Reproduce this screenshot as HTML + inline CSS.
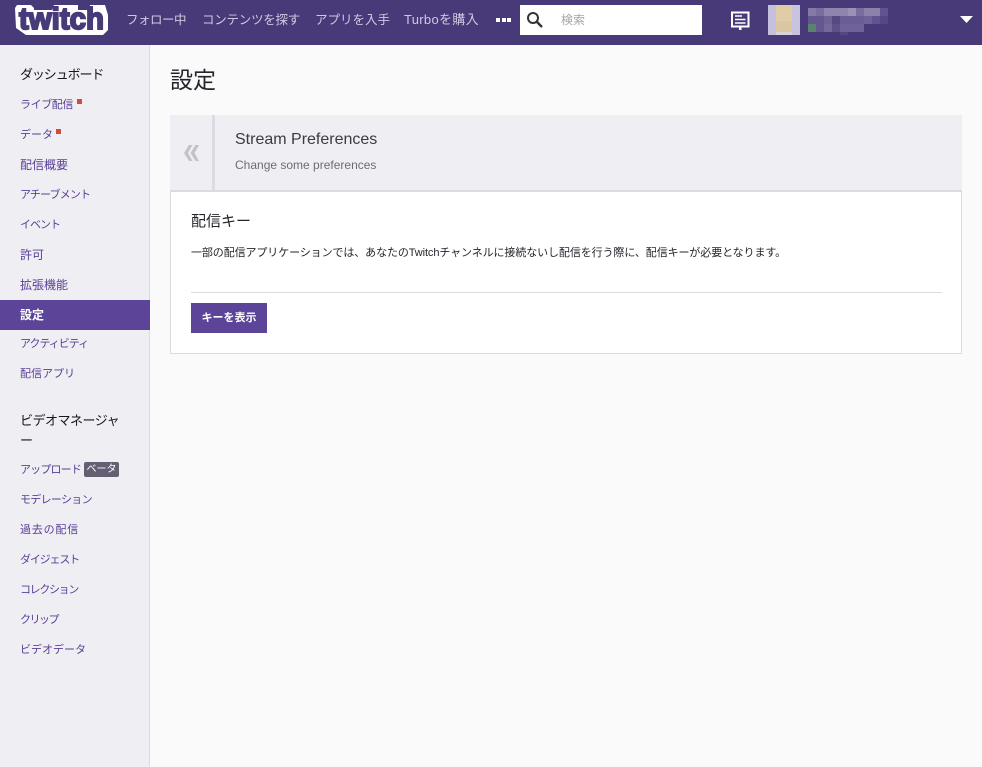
<!DOCTYPE html>
<html lang="ja"><head><meta charset="utf-8"><title>設定</title>
<style>
*{box-sizing:border-box}
html,body{margin:0;padding:0;width:982px;height:767px;overflow:hidden;background:#fafafa;font-family:"Liberation Sans","Noto Sans CJK JP",sans-serif;}
.a{position:absolute;white-space:nowrap}
#top{position:absolute;left:0;top:0;width:982px;height:45px;background:#483a79}
.nav{position:absolute;top:11px;font-size:12.5px;line-height:18px;color:#cfc8e0;white-space:nowrap}
#side{position:absolute;left:0;top:45px;width:150px;height:722px;background:#efeef3;border-right:1px solid #dcdbe2}
.h{position:absolute;left:20px;font-size:13px;line-height:18px;color:#19171c;white-space:nowrap}
.l{position:absolute;left:20px;font-size:11px;line-height:16px;color:#5a3f96;white-space:nowrap}
.k{font-size:12px}
.px{position:absolute;width:8px;height:8px}
</style></head><body>
<div id="top">
<svg class="a" style="left:0;top:0" width="120" height="45" viewBox="0 0 120 45"><path d="M15 8L17 5H31L34 8V10H52L54 5H78V10H90V5H105L108 15V30L103 35H26L16 28Z" fill="#fff"/><text x="19" y="29" font-family="Liberation Sans" font-weight="700" font-size="31" textLength="85" lengthAdjust="spacingAndGlyphs" fill="#483a79" stroke="#483a79" stroke-width="2">twitch</text></svg>
<div class="nav" style="left:126px;letter-spacing:-.5px">フォロー中</div>
<div class="nav" style="left:202px;letter-spacing:-.25px">コンテンツを探す</div>
<div class="nav" style="left:315px">アプリを入手</div>
<div class="nav" style="left:404px;font-size:13px;letter-spacing:.3px">Turboを購入</div>
<div class="a" style="left:496px;top:18px;width:4px;height:4px;background:#fff"></div>
<div class="a" style="left:502px;top:18px;width:4px;height:4px;background:#fff"></div>
<div class="a" style="left:507px;top:18px;width:4px;height:4px;background:#fff"></div>
<div class="a" style="left:520px;top:5px;width:182px;height:30px;background:#fff"></div>
<svg class="a" style="left:526px;top:11px" width="18" height="18" viewBox="0 0 18 18"><circle cx="7" cy="7" r="5" fill="none" stroke="#333" stroke-width="2"/><path d="M10.5 10.5L16 16" stroke="#333" stroke-width="2.4"/></svg>
<div class="a" style="left:561px;top:11px;font-size:12px;line-height:18px;color:#a5a5a8">検索</div>
<svg class="a" style="left:731px;top:11px" width="20" height="20" viewBox="0 0 20 20"><path d="M1 1.5h16.500v14H1z" fill="none" stroke="#fff" stroke-width="2"/><path d="M4 5h7M4 8.500h10.500M4 12h10.500" stroke="#fff" stroke-width="1.600"/><path d="M8 16h2.500v3H8z" fill="#fff"/></svg>
<div class="a" style="left:768px;top:5px;width:32px;height:30px;background:linear-gradient(90deg,#c5c0de 0 8px,#e0cda6 8px 24px,#c8c3df 24px)"></div>
<div class="a" style="left:776px;top:32px;width:16px;height:3px;background:#dcd3d6"></div>
<div class="a" style="left:776px;top:21px;width:16px;height:11px;background:#d9c7a3"></div>
<div class="px" style="left:808px;top:8px;background:#8579a6"></div>
<div class="px" style="left:816px;top:8px;background:#7a6d9e"></div>
<div class="px" style="left:824px;top:8px;width:24px;background:#8e84ad"></div>
<div class="px" style="left:848px;top:8px;background:#9a91b6"></div>
<div class="px" style="left:856px;top:8px;background:#7a6d9e"></div>
<div class="px" style="left:864px;top:8px;width:16px;background:#8b81ab"></div>
<div class="px" style="left:880px;top:8px;background:#625390"></div>
<div class="px" style="left:808px;top:16px;width:16px;background:#65568f"></div>
<div class="px" style="left:824px;top:16px;background:#6f6299"></div>
<div class="px" style="left:832px;top:16px;background:#574782"></div>
<div class="px" style="left:840px;top:16px;width:24px;background:#6a5c94"></div>
<div class="px" style="left:864px;top:16px;background:#6f6299"></div>
<div class="px" style="left:872px;top:16px;background:#625390"></div>
<div class="px" style="left:880px;top:16px;background:#564684"></div>
<div class="px" style="left:808px;top:24px;background:#5a8270"></div>
<div class="px" style="left:816px;top:24px;background:#65568f"></div>
<div class="px" style="left:824px;top:24px;background:#75689b"></div>
<div class="px" style="left:832px;top:24px;background:#5f5089"></div>
<div class="px" style="left:840px;top:24px;width:24px;background:#6f6299"></div>
<div class="a" style="left:840px;top:32px;width:8px;height:3px;background:#564684"></div>
<svg class="a" style="left:960px;top:16px" width="13" height="8" viewBox="0 0 13 8"><path d="M0 0h13L6.500 7z" fill="#fff"/></svg>
</div>

<div id="side">
<div class="h" style="top:21px;letter-spacing:-1.100px">ダッシュボード</div>
<div class="l" style="top:52px;letter-spacing:-.4px">ライブ配信</div>
<div class="a" style="left:77px;top:54px;width:5px;height:5px;background:#d44b3c"></div>
<div class="l" style="top:82px">データ</div>
<div class="a" style="left:56px;top:84px;width:5px;height:5px;background:#d44b3c"></div>
<div class="l k" style="top:112px">配信概要</div>
<div class="l" style="top:142px;letter-spacing:-.86px">アチーブメント</div>
<div class="l" style="top:172px;letter-spacing:-1px">イベント</div>
<div class="l k" style="top:202px">許可</div>
<div class="l k" style="top:232px">拡張機能</div>
<div class="a" style="left:0;top:255px;width:150px;height:30px;background:#5c4499"></div>
<div class="l k" style="top:262px;color:#fff;font-weight:700">設定</div>
<div class="l" style="top:291px;letter-spacing:-1px">アクティビティ</div>
<div class="l" style="top:321px">配信アプリ</div>
<div class="h" style="top:366px;width:110px;white-space:normal;line-height:20px;letter-spacing:-.5px">ビデオマネージャー</div>
<div class="l" style="top:417px;letter-spacing:-.83px">アップロード</div>
<div class="a" style="left:84px;top:417px;width:35px;height:15px;background:#655f74;border-radius:2px;color:#fff;font-size:10px;line-height:16px;text-align:center">ベータ</div>
<div class="l" style="top:447px;letter-spacing:-.7px">モデレーション</div>
<div class="l" style="top:477px;letter-spacing:.8px">過去の配信</div>
<div class="l" style="top:507px;letter-spacing:-1.170px">ダイジェスト</div>
<div class="l" style="top:537px;letter-spacing:-1.330px">コレクション</div>
<div class="l" style="top:567px;letter-spacing:-1.500px">クリップ</div>
<div class="l" style="top:597px">ビデオデータ</div>
</div>

<div class="a" style="left:170px;top:65px;font-size:23px;line-height:30px;color:#26232b">設定</div>

<div class="a" style="left:170px;top:115px;width:792px;height:77px;background:#efeef3;border-bottom:2px solid #dcdbe2"></div>
<div class="a" style="left:212px;top:115px;width:3px;height:75px;background:#dcdbe2"></div>
<svg class="a" style="left:183px;top:144px" width="17" height="18" viewBox="0 0 17 18"><path d="M6 1L1 9l5 8h3.500L5 9 9.500 1zM12.500 1L7.500 9l5 8H16L11.500 9 16 1z" fill="#c3c2c9"/></svg>
<div class="a" style="left:235px;top:130px;font-size:16px;line-height:19px;color:#3c3a42">Stream Preferences</div>
<div class="a" style="left:235px;top:157px;font-size:12px;line-height:16px;color:#6e6b77">Change some preferences</div>

<div class="a" style="left:170px;top:192px;width:792px;height:162px;background:#fff;border:1px solid #dcdbe0;border-top:0"></div>
<div class="a" style="left:191px;top:212px;font-size:15px;line-height:20px;color:#26232b">配信キー</div>
<div class="a" style="left:191px;top:245px;font-size:11px;line-height:16px;color:#26232b;letter-spacing:-.1px">一部の配信アプリケーションでは、あなたのTwitchチャンネルに接続ないし配信を行う際に、配信キーが必要となります。</div>
<div class="a" style="left:191px;top:292px;width:751px;height:1px;background:#dcdbe0"></div>
<div class="a" style="left:191px;top:303px;width:76px;height:30px;background:#5c4499;color:#fff;font-size:11px;font-weight:700;line-height:30px;text-align:center">キーを表示</div>
</body></html>
